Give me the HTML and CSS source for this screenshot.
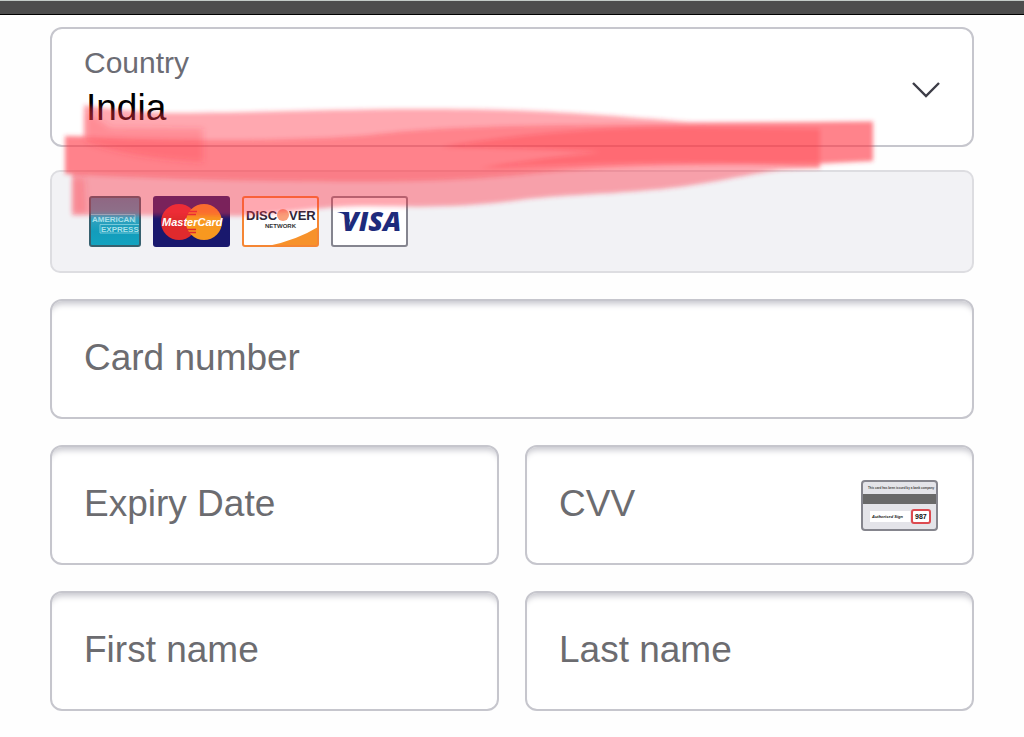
FILE: index.html
```html
<!DOCTYPE html>
<html lang="en">
<head>
  <meta charset="UTF-8">
  <meta name="viewport" content="width=device-width, initial-scale=1.0">
  <title>Add a card</title>
  <link rel="stylesheet" href="styles.css">
</head>
<body>

  <div class="top-bar"></div>

  <form class="card-form">
    <!-- Country -->
    <div class="country">
      <div class="country-text">
        <label for="country">Country</label>
        <select id="country">
          <option>India</option>
        </select>
      </div>
      <svg class="chevron" width="30" height="18" viewBox="0 0 30 18">
        <path d="M3 3 L16 16 L29 3" fill="none" stroke="#3d3d47" stroke-width="2.4"/>
      </svg>
    </div>

    <!-- Accepted cards -->
    <div class="cards">
      <svg width="52" height="51" viewBox="0 0 52 51">
        <defs>
          <linearGradient id="amex" x1="0" y1="0" x2="0" y2="1">
            <stop offset="0" stop-color="#3f8fb0"/>
            <stop offset=".4" stop-color="#3aa3c0"/>
            <stop offset=".7" stop-color="#139cbb"/>
            <stop offset="1" stop-color="#13a3c0"/>
          </linearGradient>
        </defs>
        <rect x="1" y="1" width="50" height="49" rx="2" fill="url(#amex)" stroke="#37616f" stroke-width="2"/>
        <g class="amex-text">
          <text x="3" y="26">AMERICAN</text>
          <text x="12" y="36">EXPRESS</text>
        </g>
        <path d="M2 18.500H46V27M11 28.500H50M11 28.500V37H50" fill="none" stroke="#9bdbe6" stroke-width=".7"/>
      </svg>

      <svg width="77" height="51" viewBox="0 0 77 51">
        <rect width="77" height="51" rx="3" fill="#19186d"/>
        <circle cx="26" cy="26" r="18" fill="#e02a2d"/>
        <circle cx="51" cy="26" r="18" fill="#f8981f"/>
        <path d="M35 15.500h9M34 18.500h9M33 33.500h10M35 36.500h8" stroke="#e02a2d" stroke-width="1.500"/>
        <text class="mc-text" x="9" y="30">MasterCard</text>
      </svg>

      <svg width="77" height="51" viewBox="0 0 77 51">
        <rect x="1" y="1" width="75" height="49" rx="2" fill="#fff"/>
        <path d="M26 50 Q55 44 76 31 V50 Z" fill="#f7922b"/>
        <rect x="1" y="1" width="75" height="49" rx="2" fill="none" stroke="#f58634" stroke-width="2"/>
        <circle cx="41" cy="19" r="6" fill="#f9a07a"/>
        <text class="discover-text" x="4" y="24">DISC</text>
        <text class="discover-text" x="47" y="24">VER</text>
        <text class="network-text" x="23" y="32">NETWORK</text>
      </svg>

      <svg width="77" height="51" viewBox="0 0 77 51">
        <rect x="1" y="1" width="75" height="49" rx="2" fill="#fff" stroke="#85858f" stroke-width="2"/>
        <path d="M6 16h10l4 12-5-8q-3-3-9-4z" fill="#1d2b7c"/>
        <text class="visa-text" x="11" y="35">VISA</text>
      </svg>
    </div>

    <!-- Card details -->
    <div class="field wide">
      <input type="text" aria-label="Card number" placeholder="Card number">
    </div>
    <div class="field">
      <input type="text" aria-label="Expiry Date" placeholder="Expiry Date">
    </div>
    <div class="field">
      <input type="text" aria-label="CVV" placeholder="CVV">
      <svg class="cvv-icon" width="77" height="51" viewBox="0 0 77 51">
        <rect x="1" y="1" width="75" height="49" rx="3" fill="#e4e4e9" stroke="#85858d" stroke-width="2"/>
        <text class="cvv-small" x="7" y="9">This card has been issued by a bank company</text>
        <rect x="2" y="14" width="73" height="10" fill="#696969"/>
        <rect x="9" y="31" width="40" height="11" fill="#fff"/>
        <text class="cvv-sign" x="11" y="38">Authorised Sign</text>
        <rect x="51" y="30" width="18" height="13" rx="2" fill="#fff" stroke="#dc4a50" stroke-width="2"/>
        <text class="cvv-code" x="54" y="39">987</text>
      </svg>
    </div>
    <div class="field">
      <input type="text" aria-label="First name" placeholder="First name">
    </div>
    <div class="field">
      <input type="text" aria-label="Last name" placeholder="Last name">
    </div>
  </form>

  <!-- Red highlighter strokes over the form -->
  <svg class="marker" viewBox="0 0 1024 240">
    <defs>
      <filter id="soft" x="-5%" y="-10%" width="110%" height="120%">
        <feGaussianBlur stdDeviation="2"/>
      </filter>
      <filter id="softer" x="-10%" y="-20%" width="120%" height="140%">
        <feGaussianBlur stdDeviation="3"/>
      </filter>
    </defs>
    <g fill="#ff3140" fill-opacity=".42">
      <g filter="url(#soft)">
        <path d="M84 105 Q120 111 165 113 C260 113 330 109 420 109 C540 109 590 114 690 122 L873 122 V161 L820 164 V168 L780 170 C730 177 705 186 640 191 C590 195 560 195 520 200 C460 208 420 207 370 206 C320 206 290 213 240 216 L72 215 V174 H65 V136 H84 Z"/>
        <path fill-opacity=".33" d="M65 136 C180 142 300 141 370 135 C450 124 600 125 690 124 L873 121 V161 C760 166 640 162 540 173 C450 183 360 183 220 180 Q140 178 65 174 Z"/>
        <path fill-opacity=".3" d="M440 147 C520 134 600 127 690 127 L820 129 V168 L790 166 C690 160 610 163 480 168 Q540 158 600 152 Q520 148 440 147 Z"/>
      </g>
      <g filter="url(#softer)">
        <path fill-opacity=".24" d="M86 110 L110 128 L203 129 V162 Q130 158 86 142 Z"/>
        <path fill-opacity=".24" d="M74 178 L84 178 L86 213 H74 Z"/>
      </g>
    </g>
  </svg>

</body>
</html>
```

FILE: styles.css
```css
* {
  box-sizing: border-box;
}
body {
  margin: 0;
  background: #fefefe;
  font-family: "Liberation Sans", Arial, sans-serif;
  position: relative;
}
.top-bar {
  height: 15px;
  background: #4d4d4d;
  border-top: 1px solid #c3cbc7;
  border-bottom: 1px solid #000;
}
.card-form {
  display: grid;
  grid-template-columns: repeat(2, minmax(0, 1fr));
  gap: 26px;
  padding: 12px 50px 26px;
}
.country, .cards, .wide {
  grid-column: 1 / -1;
}
.country, .field {
  height: 120px;
  display: flex;
  align-items: center;
  background: #fff;
  border: 2px solid #c6c6cd;
  border-radius: 12px;
}
.country {
  padding: 4px 32px 0;
}
.country-text {
  flex: 1;
}
.country label {
  display: block;
  font-size: 30px;
  line-height: 34px;
  color: #6c6c74;
}
.country select {
  display: block;
  width: 100%;
  height: 52px;
  padding: 2px 2px 0;
  border: none;
  outline: none;
  appearance: none;
  background: transparent;
  color: #000;
  font-family: inherit;
  font-size: 37px;
}
.cards {
  display: flex;
  align-items: center;
  gap: 12px;
  height: 103px;
  margin-top: -3px;
  padding: 0 37px;
  background: #f2f2f5;
  border: 2px solid #dddde1;
  border-radius: 10px;
}
.field {
  padding: 0 34px 0 32px;
  box-shadow: inset 0 8px 6px -5px #c6c6cd;
}
.field input {
  flex: 1;
  min-width: 0;
  height: 100%;
  padding: 0 0 2px;
  border: none;
  outline: none;
  background: transparent;
  color: #000;
  font-family: inherit;
  font-size: 37px;
}
.field input::placeholder {
  color: #6c6c70;
  opacity: 1;
}

/* Card logos */
.amex-text {
  font-size: 8px;
  font-weight: bold;
  fill: #a9e0ea;
}
.mc-text {
  font-size: 11px;
  font-weight: bold;
  font-style: italic;
  fill: #fff;
}
.discover-text {
  font-size: 13px;
  font-weight: bold;
  fill: #2c2638;
}
.network-text {
  font-size: 6px;
  font-weight: bold;
  fill: #333;
}
.visa-text {
  font-family: "Open Sans", sans-serif;
  font-size: 27px;
  font-weight: 800;
  font-style: italic;
  fill: #1d2b7c;
}
.cvv-small {
  font-size: 3px;
  font-weight: bold;
  fill: #444;
}
.cvv-sign {
  font-size: 4px;
  font-weight: bold;
  font-style: italic;
  fill: #111;
}
.cvv-code {
  font-size: 7px;
  font-weight: bold;
  fill: #111;
}
.marker {
  position: absolute;
  top: 0;
  left: 0;
  width: 100%;
  pointer-events: none;
}
```
